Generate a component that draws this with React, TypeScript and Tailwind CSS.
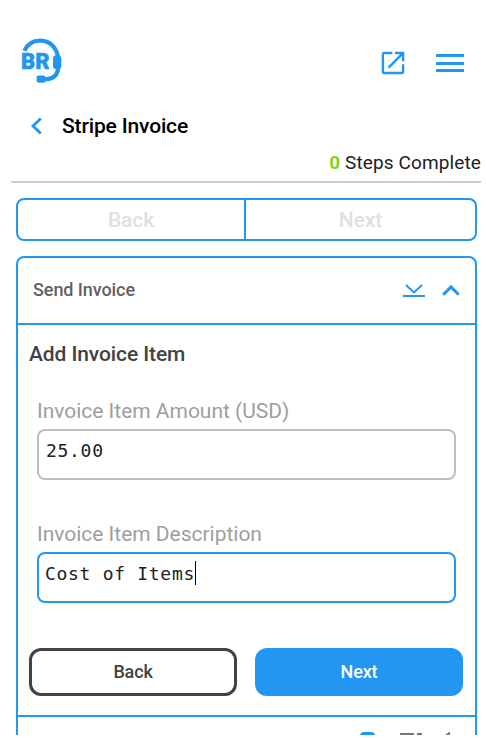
function Logo() {
  return (
    <svg className="mt-[38px] ml-5 h-[46px] w-[42px] shrink-0" viewBox="0 0 42 46" fill="none">
      <path d="M4.4 12.8C7.4 6.2 13 2.7 20 2.7c11 0 18.2 8.5 18.2 19.8v6c0 7.6-4 12.3-11.4 12.6h-4" stroke="#2196f3" strokeWidth="4.2" />
      <rect x="33" y="17.5" width="8.3" height="13.5" rx="3" fill="#2196f3" />
      <rect x="16.6" y="37.4" width="9" height="7.4" rx="2.2" fill="#2196f3" />
      <text x="1" y="31" className="font-['Roboto'] text-[22px] font-black" fill="#2196f3" stroke="#2196f3" strokeWidth="0.5" textLength="28.5" lengthAdjust="spacingAndGlyphs">
        BR
      </text>
    </svg>
  )
}

function OpenIcon() {
  return (
    <svg className="h-6 w-6" viewBox="0 0 24 24" fill="none" stroke="#2196f3" strokeWidth="2.4">
      <path d="M11.3 2H3.4Q1.9 2 1.9 3.5v17q0 1.5 1.5 1.5h17.2q1.5 0 1.5-1.5V13.3" />
      <path d="M14 2h8.1v8.2M22 2.2 7.6 16.7" />
    </svg>
  )
}

function Field({ label, value, focused = false }: { label: string; value: string; focused?: boolean }) {
  return (
    <div className="flex flex-col">
      <label className="h-[31px] pt-px text-[21px] leading-[25px] tracking-[-0.02px] whitespace-nowrap text-[#9e9e9e]">{label}</label>
      <div
        className={
          focused
            ? "flex h-[51px] rounded-lg border-2 border-[#2196f3] px-[6px] pt-[6px]"
            : "flex h-[51px] rounded-lg border-2 border-[#bdbdbd] px-[7px] pt-[6px]"
        }
      >
        <span className="h-6 font-['DejaVu_Sans_Mono',monospace] text-[18px] leading-[27px] tracking-[0.7px] whitespace-pre text-[#212121]">{value}</span>
        {focused && <span className="mt-px h-6 w-px bg-black" />}
      </div>
    </div>
  )
}

export default function App() {
  return (
    <div className="h-[738px] w-[486px] overflow-hidden bg-white font-['Roboto',sans-serif]">
      <div className="flex h-[735px] flex-col overflow-hidden">
        {/* Top bar */}
        <header className="flex h-[110px] shrink-0 justify-between">
          <Logo />
          <div className="mt-[51px] mr-[22px] flex gap-[31px]">
            <OpenIcon />
            <div className="mt-[3px] flex h-[18px] w-7 flex-col justify-between">
              <span className="h-[3px] bg-[#2196f3]" />
              <span className="h-[3px] bg-[#2196f3]" />
              <span className="h-[3px] bg-[#2196f3]" />
            </div>
          </div>
        </header>

        {/* Page title */}
        <div className="flex h-8 shrink-0 items-center pl-[30px] text-black">
          <svg className="h-[18px] w-3" viewBox="0 0 12 18" fill="none" stroke="#2196f3" strokeWidth="2.8">
            <path d="M10.8 1.5 3 9l7.8 7.5" />
          </svg>
          <h1 className="ml-5 text-[21px] leading-7 font-medium tracking-[-0.15px]">Stripe Invoice</h1>
        </div>

        {/* Progress */}
        <div className="mr-[5px] ml-[11px] h-[41px] shrink-0 border-b-2 border-[#ccc] pt-[7px] text-right text-[19px] leading-[27px] tracking-[0.12px] whitespace-nowrap text-[#212121]">
          <span className="font-bold text-[#7ed321]">0</span> Steps Complete
        </div>

        {/* Step navigation */}
        <div className="mt-[15px] mr-[9px] ml-4 flex h-[43px] shrink-0 rounded-lg border-2 border-[#2196f3] text-[21px] font-medium tracking-[-0.1px] text-[#e0e0e0]">
          <div className="flex w-[228px] items-center justify-center border-r-2 border-[#2196f3] pt-[2px]">Back</div>
          <div className="flex flex-1 items-center justify-center pt-[2px]">Next</div>
        </div>

        {/* Invoice card */}
        <section className="mt-[15px] mr-[9px] ml-4 h-[520px] shrink-0 rounded-t-lg border-2 border-[#2196f3]">
          <div className="flex h-[67px] items-center border-b-2 border-[#2196f3] pl-[15px]">
            <h2 className="mb-[3px] text-[18px] font-medium tracking-[-0.08px] text-[#616161]">Send Invoice</h2>
            <svg className="mr-[17px] ml-auto h-[14px] w-[22px]" viewBox="0 0 22 14" fill="none" stroke="#2196f3" strokeWidth="2">
              <path d="M3 1l8 7.5L19 1M0 12h22" />
            </svg>
            <svg className="mr-[15px] mb-px h-3 w-[18px]" viewBox="0 0 18 12" fill="none" stroke="#2196f3" strokeWidth="3">
              <path d="M1.2 10.7 9 2.9l7.8 7.8" />
            </svg>
          </div>

          <div className="h-[392px] border-b-2 border-[#2196f3] px-[11px] pt-4">
            <h3 className="h-[57px] text-[21px] leading-[26px] font-medium tracking-[-0.1px] text-[#424242]">Add Invoice Item</h3>
            <div className="flex flex-col gap-[41px] pr-[8px] pl-2">
              <Field label="Invoice Item Amount (USD)" value="25.00" />
              <Field label="Invoice Item Description" value="Cost of Items" focused />
            </div>
            <div className="mt-[45px] mr-[1px] flex h-12 gap-[18px] text-[18px] font-medium tracking-[-0.15px]">
              <button className="w-52 rounded-xl border-[3px] border-[#424242] pb-px text-[#424242]">Back</button>
              <button className="w-52 rounded-xl bg-[#2196f3] pb-px text-white">Next</button>
            </div>
          </div>

          {/* Status icons of the following step */}
          <div className="flex pt-[15px] pl-[342px]">
            <div className="h-5 w-[15px] rounded-[4px] bg-[#2196f3]" />
            <div className="mt-px ml-[25px] h-4 w-[14px] bg-[#757575]" />
            <div className="mt-px ml-[3px] h-4 w-[5px] bg-[#757575]" />
            <svg className="ml-[22px] h-4 w-2" viewBox="0 0 8 16" fill="#757575">
              <path d="M6 0v16H0V4l5-4z" />
            </svg>
          </div>
        </section>
      </div>
    </div>
  )
}
